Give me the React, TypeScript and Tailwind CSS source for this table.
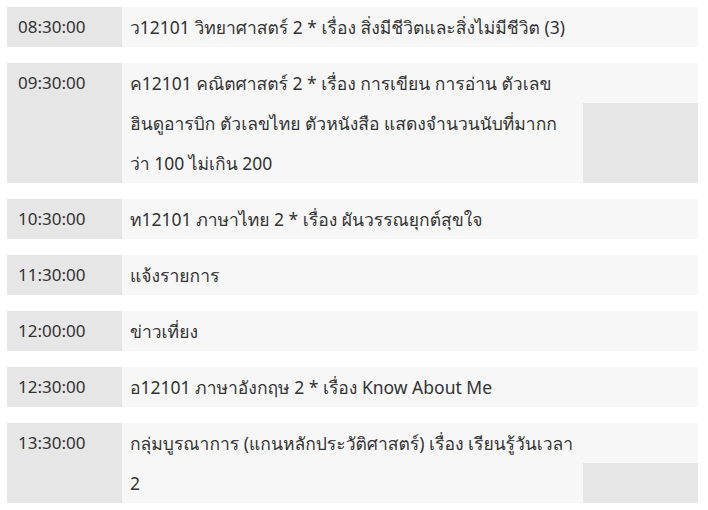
import React from "react";

type Row = { time: string; lines: string[] };

const rows: Row[] = [
  { time: "08:30:00", lines: ["ว12101 วิทยาศาสตร์ 2 * เรื่อง สิ่งมีชีวิตและสิ่งไม่มีชีวิต (3)"] },
  {
    time: "09:30:00",
    lines: [
      "ค12101 คณิตศาสตร์ 2 * เรื่อง การเขียน การอ่าน ตัวเลข",
      "ฮินดูอารบิก ตัวเลขไทย ตัวหนังสือ แสดงจำนวนนับที่มากก",
      "ว่า 100 ไม่เกิน 200",
    ],
  },
  { time: "10:30:00", lines: ["ท12101 ภาษาไทย 2 * เรื่อง ผันวรรณยุกต์สุขใจ"] },
  { time: "11:30:00", lines: ["แจ้งรายการ"] },
  { time: "12:00:00", lines: ["ข่าวเที่ยง"] },
  { time: "12:30:00", lines: ["อ12101 ภาษาอังกฤษ 2 * เรื่อง Know About Me"] },
  { time: "13:30:00", lines: ["กลุ่มบูรณาการ (แกนหลักประวัติศาสตร์) เรื่อง เรียนรู้วันเวลา", "2"] },
];

const ScheduleRow: React.FC<{ row: Row }> = ({ row }) => {
  return (
    <div className="flex">
      <div className="w-[115px] shrink-0 bg-[#e6e6e6] pl-[11px] text-[17px] leading-[40px]">
        {row.time}
      </div>
      <div className="flex flex-1 bg-[#f7f7f7]">
        <div className="flex-1 pl-2 leading-[40px]">
          {row.lines.map((line, i) => (
            <div key={i} className="whitespace-nowrap">
              {line}
            </div>
          ))}
        </div>
        <div className="flex w-[115px] shrink-0 flex-col">
          <div className="h-[40px] shrink-0" />
          <div className="flex-1 bg-[#e6e6e6]" />
        </div>
      </div>
    </div>
  );
};

const App: React.FC = () => {
  return (
    <div className="flex w-[708px] flex-col gap-4 bg-white pl-[7px] pr-[10px] pt-[7px] font-['Noto_Sans',Loma,sans-serif] text-[17.5px] text-[#333333]">
      {rows.map((row) => (
        <ScheduleRow key={row.time} row={row} />
      ))}
    </div>
  );
};

export default App;
